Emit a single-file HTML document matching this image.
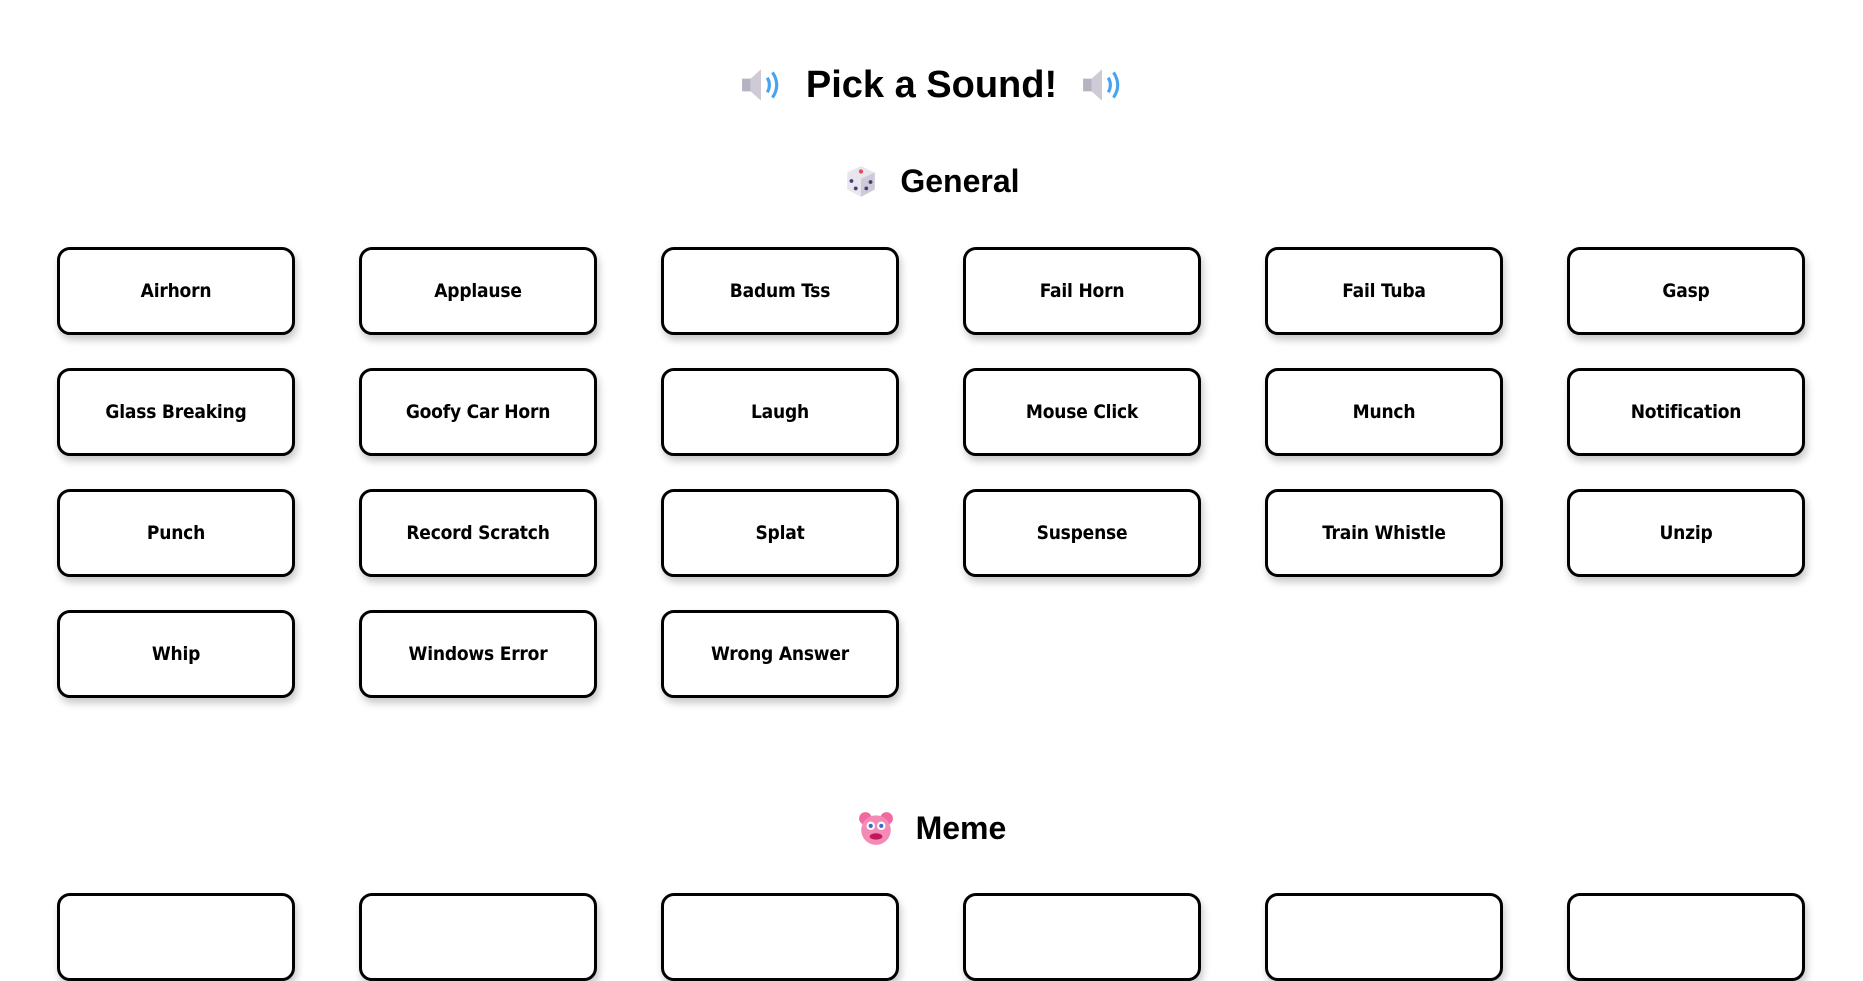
<!DOCTYPE html>
<html><head><meta charset="utf-8"><style>
html,body{margin:0;padding:0;background:#fff;width:1863px;height:895px;overflow:hidden;font-family:"Liberation Sans",sans-serif;color:#000}
.t{position:absolute;left:0;width:1863px;text-align:center;font-weight:bold;white-space:nowrap}
.t span,.t svg{display:inline-block;vertical-align:middle}
.b{position:absolute;width:232px;height:82px;border:3px solid #000;border-radius:13px;box-shadow:2px 5px 8px rgba(0,0,0,.22);display:flex;align-items:center;justify-content:center;font-weight:bold;font-size:19px;font-family:"DejaVu Sans Condensed","Liberation Sans",sans-serif;background:#fff;letter-spacing:-0.2px}
</style></head><body>
<div class="t" style="top:58px;font-size:38px;height:50px;line-height:50px">
<svg width="44" height="40" viewBox="0 0 42 36"><path d="M3 12h8l10-9v30l-10-9H3z" fill="#cfcbd6"/><path d="M3 12h8v12H3z" fill="#b7b2c0"/><path d="M27 11q4 7 0 14" stroke="#4aa3f0" stroke-width="3" fill="none"/><path d="M32 6q8 12 0 24" stroke="#4aa3f0" stroke-width="3" fill="none"/></svg>
<span style="margin:0 12px">Pick a Sound!</span>
<svg width="44" height="40" viewBox="0 0 42 36"><path d="M3 12h8l10-9v30l-10-9H3z" fill="#cfcbd6"/><path d="M3 12h8v12H3z" fill="#b7b2c0"/><path d="M27 11q4 7 0 14" stroke="#4aa3f0" stroke-width="3" fill="none"/><path d="M32 6q8 12 0 24" stroke="#4aa3f0" stroke-width="3" fill="none"/></svg>
</div>
<div class="t" style="top:156px;font-size:32px;height:44px;line-height:44px">
<svg width="36" height="36" viewBox="0 0 34 34"><path d="M4 9l13-6 13 6v16l-13 7-13-7z" fill="#e8e5ee"/><path d="M17 15v17l13-7V9z" fill="#cfcad8"/><circle cx="17" cy="8" r="2" fill="#e64a5a"/><circle cx="8" cy="17" r="1.8" fill="#4b3a7a"/><circle cx="12" cy="24" r="1.8" fill="#4b3a7a"/><circle cx="22" cy="24" r="1.8" fill="#4b3a7a"/><circle cx="26" cy="18" r="1.8" fill="#4b3a7a"/></svg>
<span style="margin-left:12px">General</span>
</div>
<div class="t" style="top:803px;font-size:32px;height:44px;line-height:44px">
<svg width="38" height="38" viewBox="0 0 36 36"><circle cx="8" cy="9" r="6" fill="#f06aa0"/><circle cx="28" cy="9" r="6" fill="#f06aa0"/><circle cx="18" cy="20" r="14" fill="#f48bb6"/><ellipse cx="13" cy="16" rx="4" ry="4" fill="#fff"/><ellipse cx="23" cy="16" rx="4" ry="4" fill="#fff"/><circle cx="13" cy="16" r="2" fill="#3a6ad0"/><circle cx="23" cy="16" r="2" fill="#3a6ad0"/><ellipse cx="18" cy="26" rx="6" ry="3" fill="#c2185b"/></svg>
<span style="margin-left:12px">Meme</span>
</div>
<div class="b" style="left:57px;top:247px">Airhorn</div>
<div class="b" style="left:359px;top:247px">Applause</div>
<div class="b" style="left:661px;top:247px">Badum Tss</div>
<div class="b" style="left:963px;top:247px">Fail Horn</div>
<div class="b" style="left:1265px;top:247px">Fail Tuba</div>
<div class="b" style="left:1567px;top:247px">Gasp</div>
<div class="b" style="left:57px;top:368px">Glass Breaking</div>
<div class="b" style="left:359px;top:368px">Goofy Car Horn</div>
<div class="b" style="left:661px;top:368px">Laugh</div>
<div class="b" style="left:963px;top:368px">Mouse Click</div>
<div class="b" style="left:1265px;top:368px">Munch</div>
<div class="b" style="left:1567px;top:368px">Notification</div>
<div class="b" style="left:57px;top:489px">Punch</div>
<div class="b" style="left:359px;top:489px">Record Scratch</div>
<div class="b" style="left:661px;top:489px">Splat</div>
<div class="b" style="left:963px;top:489px">Suspense</div>
<div class="b" style="left:1265px;top:489px">Train Whistle</div>
<div class="b" style="left:1567px;top:489px">Unzip</div>
<div class="b" style="left:57px;top:610px">Whip</div>
<div class="b" style="left:359px;top:610px">Windows Error</div>
<div class="b" style="left:661px;top:610px">Wrong Answer</div>
<div class="b" style="left:57px;top:893px"></div>
<div class="b" style="left:359px;top:893px"></div>
<div class="b" style="left:661px;top:893px"></div>
<div class="b" style="left:963px;top:893px"></div>
<div class="b" style="left:1265px;top:893px"></div>
<div class="b" style="left:1567px;top:893px"></div>
</body></html>
